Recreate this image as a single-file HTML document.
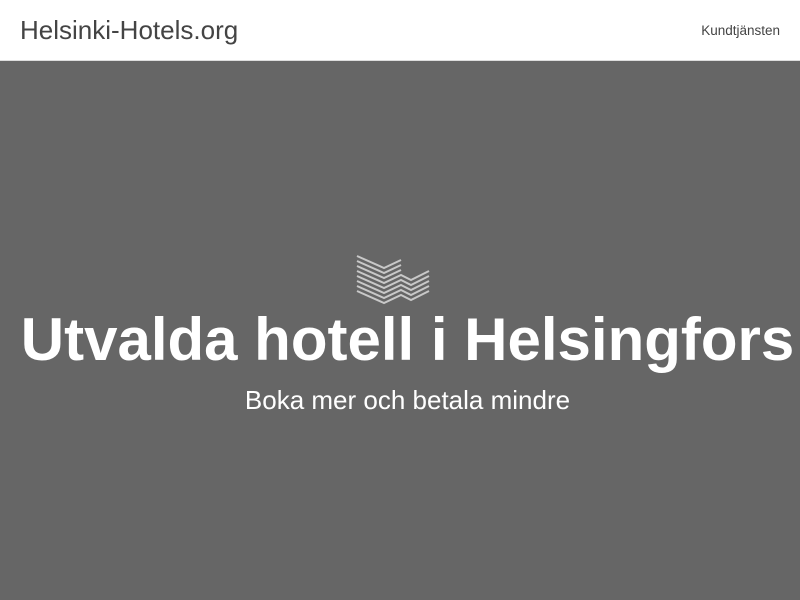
<!DOCTYPE html>
<html><head><meta charset="utf-8"><style>
body{margin:0;width:800px;height:600px;overflow:hidden;font-family:"Liberation Sans",sans-serif;background:#666}
.hdr{height:60px;background:#fff;border-bottom:1px solid #ddd;position:relative}
.logo{position:absolute;left:20px;top:15px;font-size:26px;color:#444}
.nav{position:absolute;right:20px;top:23px;font-size:13.5px;color:#444}
h1{position:absolute;top:305px;left:0;width:815px;text-align:center;margin:0;color:#fff;font-size:60px;font-weight:bold}
.sub{position:absolute;top:385px;left:0;width:815px;text-align:center;color:#fff;font-size:26px}
svg{position:absolute;left:355px;top:252px}
</style></head><body>
<div class="hdr"><div class="logo">Helsinki-Hotels.org</div><div class="nav">Kundtjänsten</div></div>
<svg width="80" height="55" fill="none" stroke="#c8c8c8" stroke-width="2">
<path d="M2 4 L29 16 L46 8"/>
<path d="M2 9 L29 21 L46 13"/>
<path d="M2 14 L29 26 L46 18"/>
<path d="M2 19 L29 31 L46 23 L56 28 L74 19"/>
<path d="M2 24 L29 36 L46 28 L56 33 L74 24"/>
<path d="M2 29 L29 41 L46 33 L56 38 L74 29"/>
<path d="M2 34 L29 46 L46 38 L56 43 L74 34"/>
<path d="M2 39 L29 51 L46 43 L56 48 L74 39"/>
</svg>
<h1>Utvalda hotell i Helsingfors</h1>
<div class="sub">Boka mer och betala mindre</div>
</body></html>
